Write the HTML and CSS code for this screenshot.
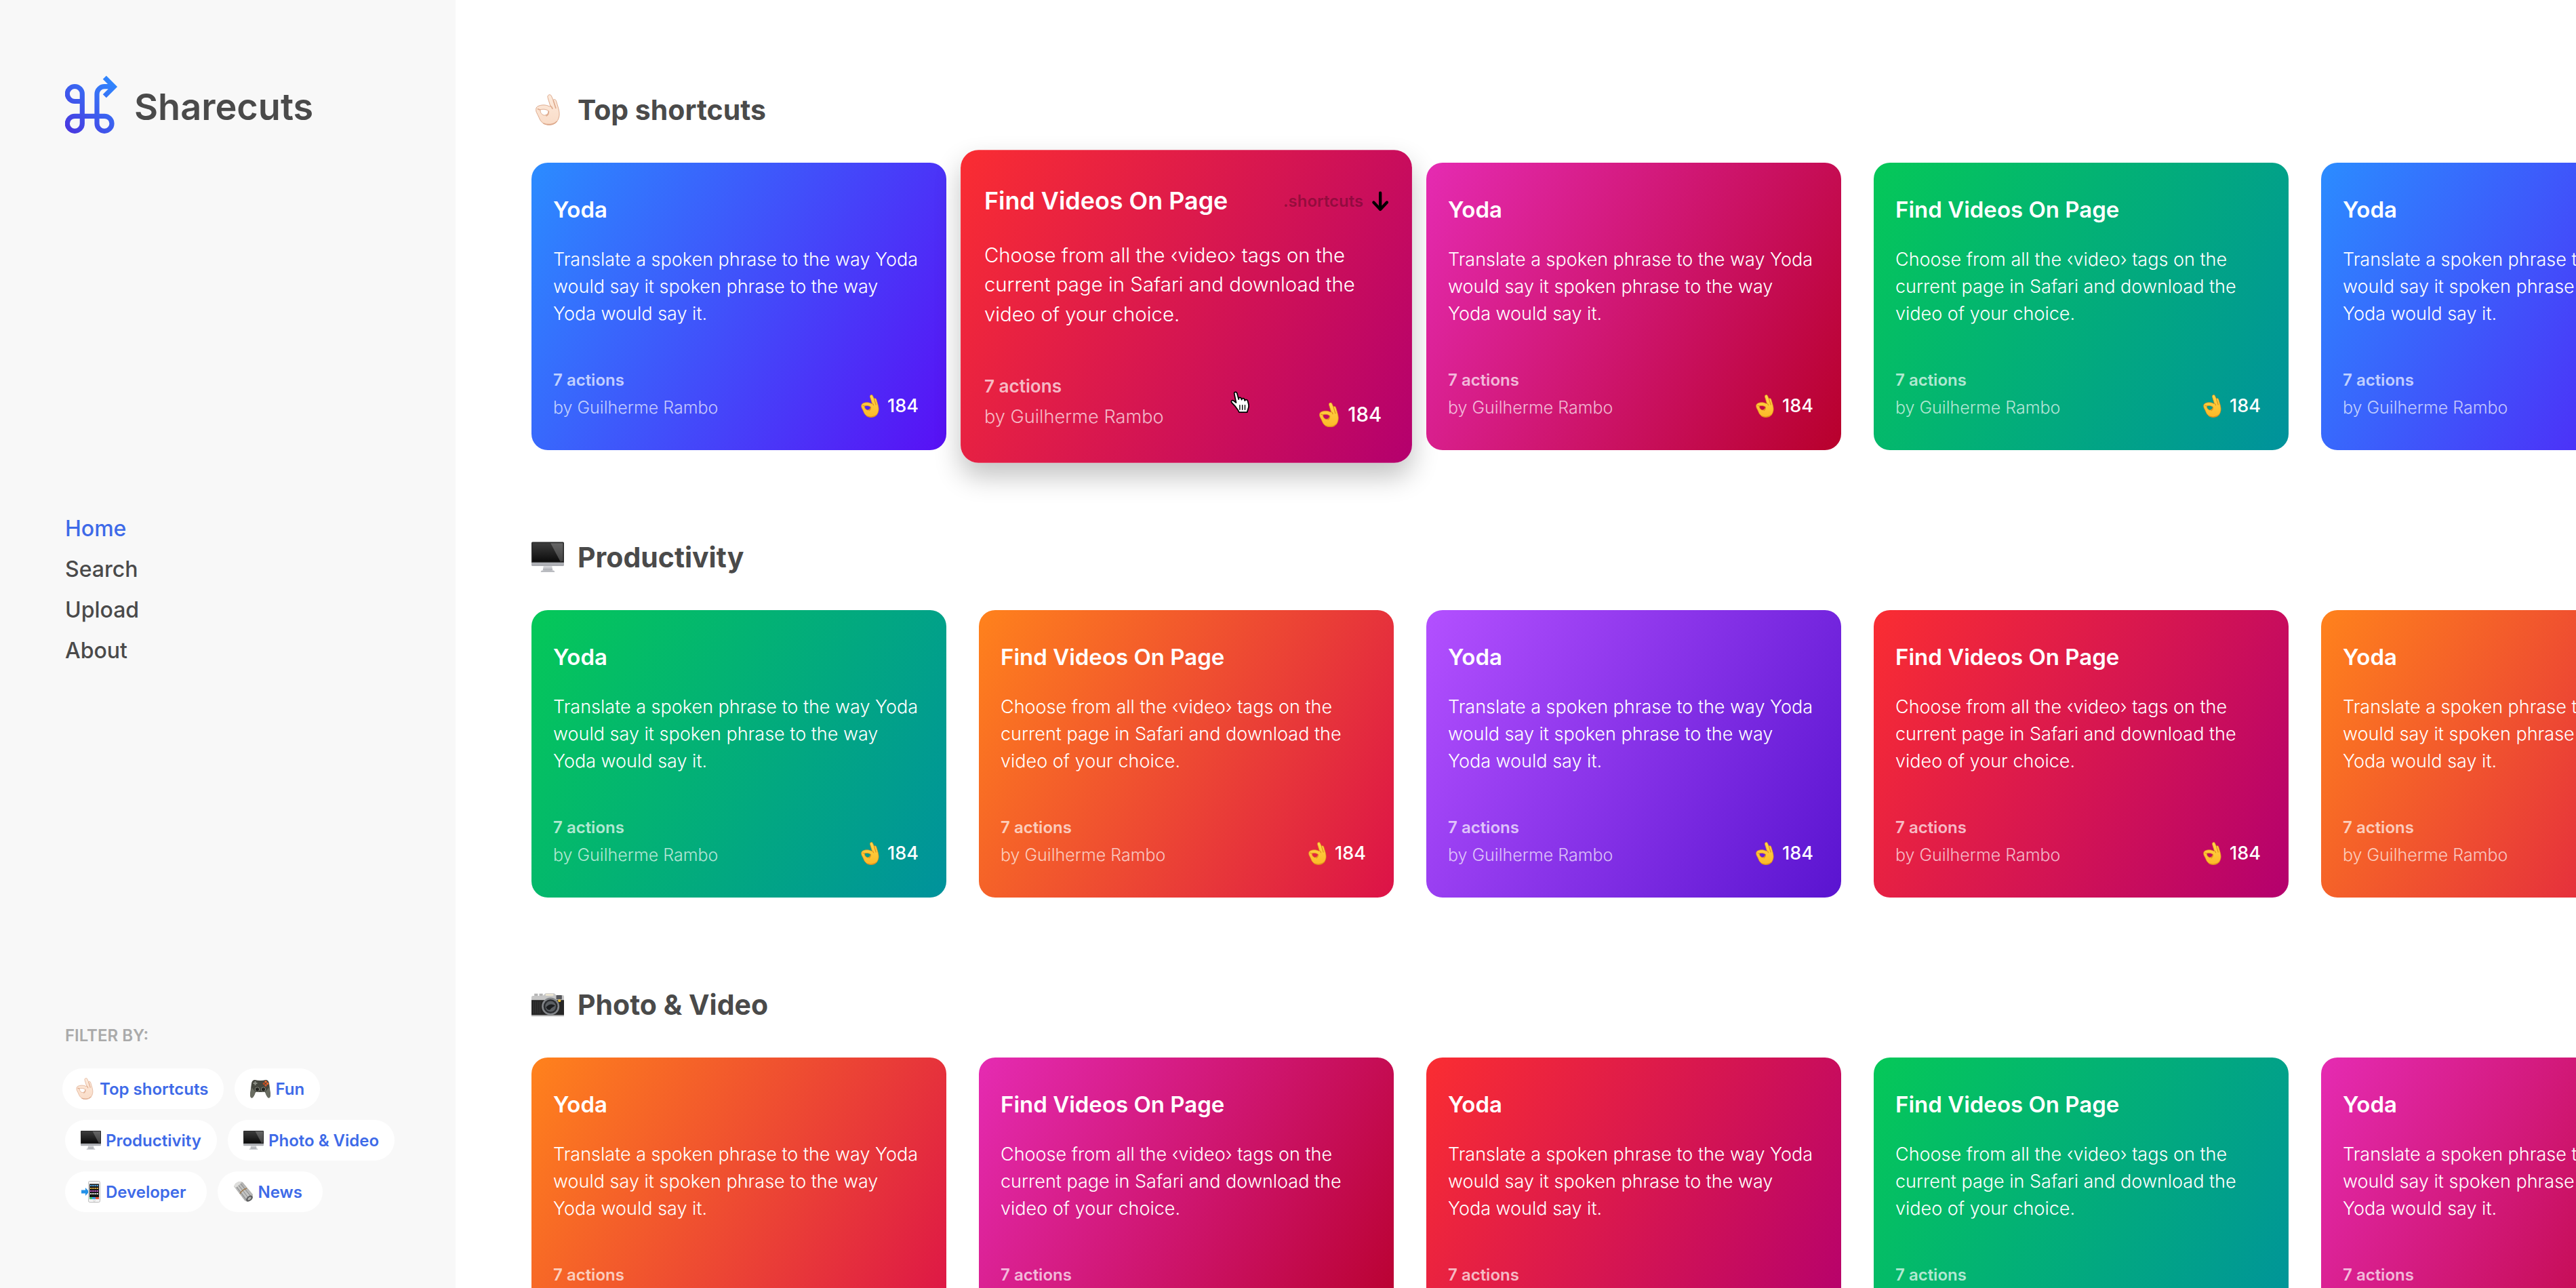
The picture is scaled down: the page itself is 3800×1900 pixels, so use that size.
FILE: index.html
```html
<!DOCTYPE html>
<html lang="en">
<head>
<meta charset="utf-8">
<meta name="viewport" content="width=device-width, initial-scale=1">
<title>Sharecuts</title>
<link rel="stylesheet" href="styles.css">
</head>
<body>
<svg class="sprite" aria-hidden="true">
  <defs>
    <linearGradient id="brand-fill" gradientUnits="userSpaceOnUse" x1="76" y1="8" x2="8" y2="82">
      <stop offset="0" stop-color="#2f8aff"/><stop offset="1" stop-color="#4839e0"/>
    </linearGradient>
    <linearGradient id="gold" x1="0" y1="0" x2="0" y2="1">
      <stop offset="0" stop-color="#ffd84a"/><stop offset="1" stop-color="#fcb827"/>
    </linearGradient>
    <linearGradient id="pale" x1="0" y1="0" x2="0" y2="1">
      <stop offset="0" stop-color="#fdeadb"/><stop offset="1" stop-color="#f9dcc8"/>
    </linearGradient>
    <linearGradient id="screen" x1="0" y1="0" x2="0" y2="1">
      <stop offset="0" stop-color="#3c3c3c"/><stop offset="1" stop-color="#0b0b0b"/>
    </linearGradient>
    <linearGradient id="metal" x1="0" y1="0" x2="0" y2="1">
      <stop offset="0" stop-color="#dcdde0"/><stop offset="1" stop-color="#a9abb0"/>
    </linearGradient>
    <linearGradient id="paper" x1="0" y1="1" x2="1" y2="0">
      <stop offset="0" stop-color="#77787a"/><stop offset=".5" stop-color="#c9c9c7"/><stop offset="1" stop-color="#8c8c8c"/>
    </linearGradient>
  </defs>
  <symbol id="hand" viewBox="0 0 36 46">
    <path fill-rule="evenodd" d="M19 1.4C20.600 0 22.800.7 23.500 2.900L26 8.500C27.500 7 29.800 7.600 30.400 9.700L33.500 20C35.300 26 35.800 31 33.800 36C31.500 42.500 26 45.600 19.500 45.300C12.500 45 7.500 41 5.200 34.500C4.200 31.500 2.500 29.500 1.300 26.500C0 22.700.6 18.800 3.700 17.700C8 15.500 15.500 15 20.800 18.200L21.800 17.200L18.200 5.500C17.700 3.600 17.800 2.300 19 1.400ZM7.200 22.800C6.200 25.500 8.600 30 12.300 31C16 31.400 19.200 28.500 19.300 24.800C15.700 22 11 21.700 7.200 22.800Z"/>
    <path class="hand-line" d="M26 8.500L30 21M21.800 17.200C23.500 18.200 24.800 19.800 25 22M19.300 24.800C19.600 28 18.300 30.800 15.500 32.300M3 21.500C4.500 22.600 6 22.900 7.200 22.800M11.500 43C17 45.500 26 45.500 31.500 40"/>
  </symbol>
  <symbol id="monitor" viewBox="0 0 46 43">
    <path d="M17 34H29L30 40H16Z" fill="url(#metal)"/>
    <path d="M14 40.500Q23 38.500 32 40.500L33 42.500H13Z" fill="#b9bbc0"/>
    <rect width="46" height="34" rx="1.500" fill="url(#metal)"/>
    <path d="M1.500 0H44.500Q46 0 46 1.500V29H0V1.500Q0 0 1.500 0Z" fill="#2a2a2a"/>
    <rect x="1.500" y="1.500" width="43" height="26.500" fill="url(#screen)"/>
    <path d="M27 1.500H44.500V27L41 28Z" fill="#fff" opacity=".22"/>
  </symbol>
  <symbol id="camera" viewBox="0 0 46 33">
    <path d="M4 1H9V4H4ZM11 1H16V4H11Z" fill="#b5b5b5"/>
    <path d="M2 4H16L20 .5H32L35 3H44Q46 3 46 5V11H0V6Q0 4 2 4Z" fill="#c6c6c6"/>
    <path d="M20 1.200H31V4H20Z" fill="#ece5d2"/>
    <rect y="10" width="46" height="22" fill="#262626"/>
    <path d="M3 12V29M6 12V29M9 12V29M12 12V29" stroke="#3a3a3a"/>
    <path d="M0 31H46V33H0Z" fill="#b8b8b8"/>
    <rect x="35" y="3" width="8" height="6" rx="1" fill="#55565a"/>
    <circle cx="39.500" cy="11" r="2" fill="#f5c93a"/>
    <circle cx="27" cy="19" r="12.500" fill="#83868a"/>
    <circle cx="27" cy="19" r="10" fill="#2c2e31"/>
    <circle cx="27" cy="19" r="7.500" fill="#5c6064"/>
    <path d="M20.500 20Q27 13 33.500 18Q28 21 26 24Q22 24 20.500 20Z" fill="#1b1d1f"/>
  </symbol>
  <symbol id="gamepad" viewBox="0 0 30 28">
    <path d="M7 1Q15 3 23 1Q27 1 28 6L30 22Q30 28 27 27.500Q25 27 22 19H8Q5 27 3 27.500Q0 28 0 22L2 6Q3 1 7 1Z" fill="#45473f"/>
    <path d="M2 12L0 22Q0 28 3 27.500Q5 27 8 19ZM28 12L30 22Q30 28 27 27.500Q25 27 22 19Z" fill="#6a6d62"/>
    <path d="M7.500 3V9M4.500 6H10.500" stroke="#8b8e85" stroke-width="2"/>
    <circle cx="10.500" cy="15" r="3.200" fill="#22231f" stroke="#85887d"/><circle cx="19.500" cy="15" r="3.200" fill="#22231f" stroke="#85887d"/>
    <circle cx="23" cy="3.800" r="1.700" fill="#f0672a"/><circle cx="20.300" cy="6.500" r="1.700" fill="#b64a20"/><circle cx="25.700" cy="6.500" r="1.700" fill="#f0672a"/><circle cx="23" cy="9" r="1.700" fill="#d4552a"/>
  </symbol>
  <symbol id="phone" viewBox="0 0 30 32">
    <path d="M1 13.500H7V10L12.500 16L7 22V18.500H1Z" fill="#2492e8"/>
    <rect x="11.500" y=".5" width="17" height="31" rx="2" fill="#f3f3f3" stroke="#bcbcbc"/>
    <rect x="13" y="4.500" width="14" height="22.500" fill="#151515"/>
    <path d="M14 7H26" stroke="#55b0ee" stroke-width="2.200" stroke-dasharray="2.200 1"/>
    <path d="M14 11H26" stroke="#e6b441" stroke-width="2.200" stroke-dasharray="2.200 1"/>
    <path d="M14 15H26" stroke="#c75ad0" stroke-width="2.200" stroke-dasharray="2.200 1"/>
    <path d="M14 19H26" stroke="#e8ebe5" stroke-width="2.200" stroke-dasharray="2.200 1"/>
    <path d="M13 25.500H17" stroke="#3fc46c" stroke-width="3"/><path d="M17 25.500H22" stroke="#3f9ee8" stroke-width="3"/><path d="M22 25.500H27" stroke="#e85a3f" stroke-width="3"/>
    <circle cx="20" cy="29.300" r="1.300" fill="#fff" stroke="#bbb" stroke-width=".6"/>
  </symbol>
  <symbol id="news" viewBox="0 0 30 32">
    <path d="M1 8Q3 2 10 1L14 2L29 20Q29 27 21 31L17 29Z" fill="url(#paper)"/>
    <path d="M3 6L20 29M6 4L24 27M10 3L27 24" stroke="#77787a" stroke-width=".9"/>
    <path d="M1 8Q3 2 10 1Q12 1 12 3L4 10Z" fill="#dededc"/>
    <path d="M10 19Q13 13 20 11" stroke="#a07b4f" stroke-width="1.500" fill="none"/>
    <ellipse cx="24" cy="26" rx="5.500" ry="3.600" transform="rotate(-38 24 26)" fill="#5d5e60"/>
    <ellipse cx="24" cy="26" rx="3" ry="1.700" transform="rotate(-38 24 26)" fill="#b3b3b1"/>
  </symbol>
</svg>

<div class="layout">
  <aside class="sidebar">
    <a class="brand" href="#">
      <svg class="brand-mark" viewBox="1 0 78 86" aria-hidden="true">
        <path d="M26.300 38.500H15.300a11 11 0 1 1 11-11V71.300a11 11 0 1 1-11-11H59a11 11 0 1 1-11 11V27.700a11 11 0 0 1 11-11H72M59.300 3.300L73 17L59.300 30.700" fill="none" stroke="url(#brand-fill)" stroke-width="7.200"/>
      </svg>
      <span class="brand-name">Sharecuts</span>
    </a>
    <nav class="menu" aria-label="Main">
      <a class="menu-link menu-link-current" href="#" aria-current="page">Home</a>
      <a class="menu-link" href="#search">Search</a>
      <a class="menu-link" href="#upload">Upload</a>
      <a class="menu-link" href="#about">About</a>
    </nav>
    <section class="filters">
      <h2 class="filters-title">FILTER BY:</h2>
      <div class="chips">
        <button class="chip chip-first" type="button"><svg class="chip-icon pale"><use href="#hand"/></svg>Top shortcuts</button>
        <button class="chip" type="button"><svg class="chip-icon"><use href="#gamepad"/></svg>Fun</button>
        <button class="chip" type="button"><svg class="chip-icon"><use href="#monitor"/></svg>Productivity</button>
        <button class="chip" type="button"><svg class="chip-icon"><use href="#monitor"/></svg>Photo &amp; Video</button>
        <button class="chip chip-wide" type="button"><svg class="chip-icon"><use href="#phone"/></svg>Developer</button>
        <button class="chip chip-wide" type="button"><svg class="chip-icon"><use href="#news"/></svg>News</button>
      </div>
    </section>
  </aside>

  <main class="main">
    <section class="shelf">
      <h2 class="shelf-title"><svg class="shelf-icon pale"><use href="#hand"/></svg>Top shortcuts</h2>
      <div class="cards">
        <article class="card blue">
          <header class="card-head"><h3 class="card-title">Yoda</h3></header>
          <p class="card-text">Translate a spoken phrase to the way Yoda would say it spoken phrase to the way Yoda would say it.</p>
          <footer class="card-foot"><div class="meta"><p class="actions">7 actions</p><p class="author">by Guilherme Rambo</p></div><button class="votes" type="button"><svg class="votes-icon"><use href="#hand"/></svg>184</button></footer>
        </article>
        <article class="card red card-active">
          <header class="card-head"><h3 class="card-title">Find Videos On Page</h3>
            <a class="download" href="#download">.shortcuts<svg class="download-icon" viewBox="0 0 22 27" aria-hidden="true"><path d="M11 2V24M2 15L11 24.500L20 15" fill="none" stroke="#000" stroke-width="4" stroke-linecap="round" stroke-linejoin="round"/></svg></a></header>
          <p class="card-text">Choose from all the &#8249;video&#8250; tags on the current page in Safari and download the video of your choice.</p>
          <footer class="card-foot"><div class="meta"><p class="actions">7 actions</p><p class="author">by Guilherme Rambo</p></div><button class="votes" type="button"><svg class="votes-icon"><use href="#hand"/></svg>184</button></footer>
          <svg class="pointer" viewBox="0 0 28 30" aria-hidden="true"><path d="M6 3.200C5.500.8 9 .2 9.700 2.600L12 11V9.600C12.300 8 15 8 15.500 9.800L16 11.500C16.300 9 19.300 9 19.800 11L20.300 12.800C20.800 10.800 23.700 11 24.200 13L25.500 18C26.500 22 24 25 23.500 28.500H12.500C11.500 25 8.500 22.500 6.500 19.500L2.500 15.500C1 13.500 3 11.700 5 12.800L8.500 15.500Z" fill="#fff" stroke="#000" stroke-width="1.600" stroke-linejoin="round"/><path d="M13.500 19V25M17 19V25M20.500 19V25" stroke="#000" stroke-width="1.300" stroke-linecap="round"/></svg>
        </article>
        <article class="card pink">
          <header class="card-head"><h3 class="card-title">Yoda</h3></header>
          <p class="card-text">Translate a spoken phrase to the way Yoda would say it spoken phrase to the way Yoda would say it.</p>
          <footer class="card-foot"><div class="meta"><p class="actions">7 actions</p><p class="author">by Guilherme Rambo</p></div><button class="votes" type="button"><svg class="votes-icon"><use href="#hand"/></svg>184</button></footer>
        </article>
        <article class="card green">
          <header class="card-head"><h3 class="card-title">Find Videos On Page</h3></header>
          <p class="card-text">Choose from all the &#8249;video&#8250; tags on the current page in Safari and download the video of your choice.</p>
          <footer class="card-foot"><div class="meta"><p class="actions">7 actions</p><p class="author">by Guilherme Rambo</p></div><button class="votes" type="button"><svg class="votes-icon"><use href="#hand"/></svg>184</button></footer>
        </article>
        <article class="card blue">
          <header class="card-head"><h3 class="card-title">Yoda</h3></header>
          <p class="card-text">Translate a spoken phrase to the way Yoda would say it spoken phrase to the way Yoda would say it.</p>
          <footer class="card-foot"><div class="meta"><p class="actions">7 actions</p><p class="author">by Guilherme Rambo</p></div><button class="votes" type="button"><svg class="votes-icon"><use href="#hand"/></svg>184</button></footer>
        </article>
      </div>
    </section>

    <section class="shelf">
      <h2 class="shelf-title"><svg class="shelf-icon"><use href="#monitor"/></svg>Productivity</h2>
      <div class="cards">
        <article class="card green">
          <header class="card-head"><h3 class="card-title">Yoda</h3></header>
          <p class="card-text">Translate a spoken phrase to the way Yoda would say it spoken phrase to the way Yoda would say it.</p>
          <footer class="card-foot"><div class="meta"><p class="actions">7 actions</p><p class="author">by Guilherme Rambo</p></div><button class="votes" type="button"><svg class="votes-icon"><use href="#hand"/></svg>184</button></footer>
        </article>
        <article class="card orange">
          <header class="card-head"><h3 class="card-title">Find Videos On Page</h3></header>
          <p class="card-text">Choose from all the &#8249;video&#8250; tags on the current page in Safari and download the video of your choice.</p>
          <footer class="card-foot"><div class="meta"><p class="actions">7 actions</p><p class="author">by Guilherme Rambo</p></div><button class="votes" type="button"><svg class="votes-icon"><use href="#hand"/></svg>184</button></footer>
        </article>
        <article class="card purple">
          <header class="card-head"><h3 class="card-title">Yoda</h3></header>
          <p class="card-text">Translate a spoken phrase to the way Yoda would say it spoken phrase to the way Yoda would say it.</p>
          <footer class="card-foot"><div class="meta"><p class="actions">7 actions</p><p class="author">by Guilherme Rambo</p></div><button class="votes" type="button"><svg class="votes-icon"><use href="#hand"/></svg>184</button></footer>
        </article>
        <article class="card red">
          <header class="card-head"><h3 class="card-title">Find Videos On Page</h3></header>
          <p class="card-text">Choose from all the &#8249;video&#8250; tags on the current page in Safari and download the video of your choice.</p>
          <footer class="card-foot"><div class="meta"><p class="actions">7 actions</p><p class="author">by Guilherme Rambo</p></div><button class="votes" type="button"><svg class="votes-icon"><use href="#hand"/></svg>184</button></footer>
        </article>
        <article class="card orange">
          <header class="card-head"><h3 class="card-title">Yoda</h3></header>
          <p class="card-text">Translate a spoken phrase to the way Yoda would say it spoken phrase to the way Yoda would say it.</p>
          <footer class="card-foot"><div class="meta"><p class="actions">7 actions</p><p class="author">by Guilherme Rambo</p></div><button class="votes" type="button"><svg class="votes-icon"><use href="#hand"/></svg>184</button></footer>
        </article>
      </div>
    </section>

    <section class="shelf">
      <h2 class="shelf-title"><svg class="shelf-icon"><use href="#camera"/></svg>Photo &amp; Video</h2>
      <div class="cards">
        <article class="card orange">
          <header class="card-head"><h3 class="card-title">Yoda</h3></header>
          <p class="card-text">Translate a spoken phrase to the way Yoda would say it spoken phrase to the way Yoda would say it.</p>
          <footer class="card-foot"><div class="meta"><p class="actions">7 actions</p><p class="author">by Guilherme Rambo</p></div><button class="votes" type="button"><svg class="votes-icon"><use href="#hand"/></svg>184</button></footer>
        </article>
        <article class="card pink">
          <header class="card-head"><h3 class="card-title">Find Videos On Page</h3></header>
          <p class="card-text">Choose from all the &#8249;video&#8250; tags on the current page in Safari and download the video of your choice.</p>
          <footer class="card-foot"><div class="meta"><p class="actions">7 actions</p><p class="author">by Guilherme Rambo</p></div><button class="votes" type="button"><svg class="votes-icon"><use href="#hand"/></svg>184</button></footer>
        </article>
        <article class="card red">
          <header class="card-head"><h3 class="card-title">Yoda</h3></header>
          <p class="card-text">Translate a spoken phrase to the way Yoda would say it spoken phrase to the way Yoda would say it.</p>
          <footer class="card-foot"><div class="meta"><p class="actions">7 actions</p><p class="author">by Guilherme Rambo</p></div><button class="votes" type="button"><svg class="votes-icon"><use href="#hand"/></svg>184</button></footer>
        </article>
        <article class="card green">
          <header class="card-head"><h3 class="card-title">Find Videos On Page</h3></header>
          <p class="card-text">Choose from all the &#8249;video&#8250; tags on the current page in Safari and download the video of your choice.</p>
          <footer class="card-foot"><div class="meta"><p class="actions">7 actions</p><p class="author">by Guilherme Rambo</p></div><button class="votes" type="button"><svg class="votes-icon"><use href="#hand"/></svg>184</button></footer>
        </article>
        <article class="card pink">
          <header class="card-head"><h3 class="card-title">Yoda</h3></header>
          <p class="card-text">Translate a spoken phrase to the way Yoda would say it spoken phrase to the way Yoda would say it.</p>
          <footer class="card-foot"><div class="meta"><p class="actions">7 actions</p><p class="author">by Guilherme Rambo</p></div><button class="votes" type="button"><svg class="votes-icon"><use href="#hand"/></svg>184</button></footer>
        </article>
      </div>
    </section>
  </main>
</div>
</body>
</html>
```

FILE: styles.css
```css
* {
  box-sizing: border-box;
}

body,
h2,
h3,
p {
  margin: 0;
}

body {
  background: #fff;
  color: #4a4a4a;
  font-family: Inter, "Open Sans", sans-serif;
}

a {
  color: inherit;
  text-decoration: none;
}

button {
  border: 0;
  padding: 0;
  font-family: inherit;
  cursor: pointer;
}

.sprite {
  position: absolute;
  width: 0;
  height: 0;
}

.layout {
  display: flex;
  height: 100vh;
}

/* Sidebar */

.sidebar {
  display: flex;
  flex: 0 0 672px;
  flex-direction: column;
  justify-content: space-between;
  padding: 111px 80px 112px 96px;
  background: #f8f8f8;
}

.brand {
  display: flex;
  align-items: flex-end;
  gap: 24px;
  padding-bottom: 30px;
}

.brand-mark {
  width: 78px;
  height: 86px;
}

.brand-name {
  font-size: 54px;
  font-weight: 600;
  line-height: 78px;
}

.menu {
  display: flex;
  flex-direction: column;
  align-items: flex-start;
}

.menu-link {
  font-size: 32px;
  font-weight: 500;
  line-height: 60px;
}

.menu-link-current {
  color: #3e6ae8;
}

.filters-title {
  margin-bottom: 32px;
  color: #aaa;
  font-size: 24px;
  font-weight: 600;
  line-height: 32px;
}

.chips {
  display: flex;
  flex-wrap: wrap;
  gap: 16px;
}

.chip {
  display: flex;
  align-items: center;
  gap: 7px;
  height: 60px;
  padding: 0 23px;
  border-radius: 30px;
  background: #fff;
  color: #3e6ae8;
  font-size: 24px;
  font-weight: 600;
}

.chip-first {
  margin-left: -4px;
  padding-left: 18px;
}

.chip-wide {
  padding-right: 30px;
}

.chip-icon {
  width: 30px;
  height: 32px;
}

/* Shelves */

.main {
  flex: 1;
  min-width: 0;
  padding: 134px 0 112px 112px;
  overflow: auto;
  scrollbar-width: none;
}

.shelf {
  margin-bottom: 130px;
}

.shelf-title {
  display: flex;
  align-items: center;
  gap: 20px;
  margin-bottom: 50px;
  font-size: 41px;
  font-weight: 700;
  line-height: 56px;
}

.shelf-icon {
  width: 48px;
  height: 46px;
}

.cards {
  display: flex;
  gap: 48px;
}

/* Cards */

.card {
  position: relative;
  flex: 0 0 612px;
  padding: 47px 32px 43px;
  border-radius: 24px;
  color: #fff;
}

.card-active {
  box-shadow: 0 18px 36px rgba(0, 0, 0, 0.24);
  transform: scale(1.088);
}

.card-head {
  display: flex;
  align-items: center;
  justify-content: space-between;
  margin-bottom: 32px;
}

.card-title {
  font-size: 33px;
  font-weight: 600;
  line-height: 44px;
}

.card-text {
  margin-bottom: 58px;
  font-size: 27px;
  font-weight: 300;
  line-height: 40px;
}

.card-foot {
  display: flex;
  align-items: flex-end;
  justify-content: space-between;
  padding-right: 9px;
}

.actions,
.author {
  line-height: 40px;
}

.actions {
  color: rgba(255, 255, 255, 0.7);
  font-size: 24px;
  font-weight: 600;
}

.author {
  color: rgba(255, 255, 255, 0.7);
  font-size: 25px;
  font-weight: 300;
}

.votes {
  display: flex;
  align-items: center;
  gap: 12px;
  background: none;
  color: #fff;
  font-size: 27px;
  font-weight: 500;
  line-height: 44px;
}

.votes-icon {
  width: 27px;
  height: 34px;
  fill: url(#gold);
  stroke: #e0901c;
}

.pale {
  fill: url(#pale);
  stroke: #dda98c;
}

.hand-line {
  fill: none;
  stroke-width: 1.6px;
}

.download {
  display: flex;
  align-items: center;
  gap: 12px;
  color: rgba(0, 0, 0, 0.3);
  font-size: 22px;
  font-weight: 600;
}

.download-icon {
  width: 22px;
  height: 27px;
}

.pointer {
  position: absolute;
  top: 327px;
  left: 365px;
  width: 28px;
  height: 30px;
}

.blue {
  background: linear-gradient(120deg, #2b8cff, #5810f5);
}

.red {
  background: linear-gradient(120deg, #fa2d32, #b4006e);
}

.pink {
  background: linear-gradient(120deg, #e52bb2, #b8002c);
}

.green {
  background: linear-gradient(120deg, #05c858, #00929c);
}

.orange {
  background: linear-gradient(120deg, #ff821c, #dc1248);
}

.purple {
  background: linear-gradient(120deg, #b350ff, #5a14d0);
}
```
